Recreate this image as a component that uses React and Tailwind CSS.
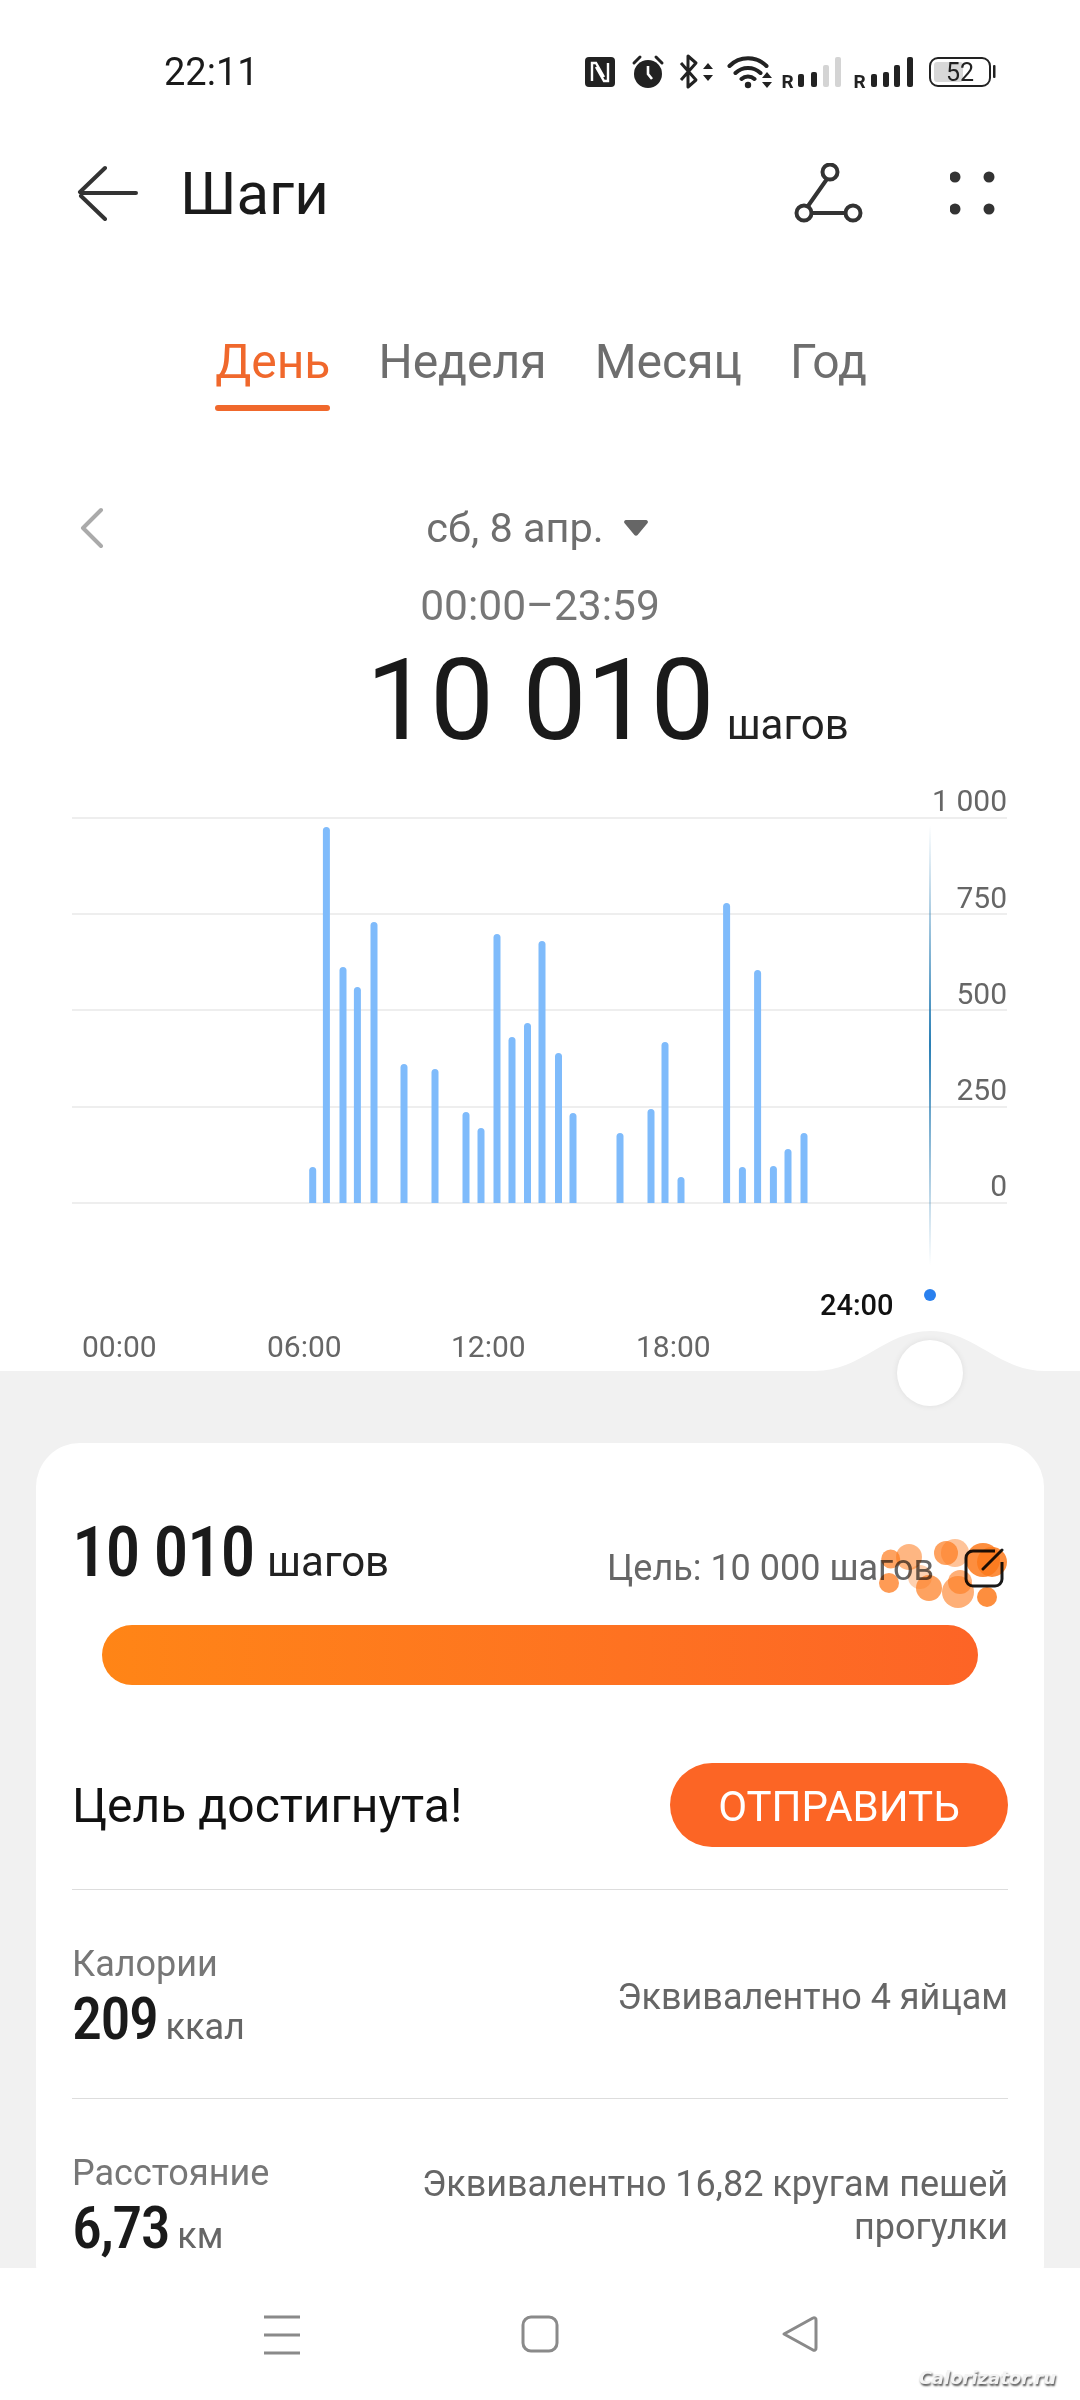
const bars = [
  [312.7, 1167], [326.4, 827], [343, 967], [357.4, 987], [374, 922], [404, 1064], [435, 1069],
  [466, 1112], [481, 1128], [497, 934], [512, 1037], [527.5, 1023], [542, 941], [558.5, 1053],
  [573, 1113], [620, 1133], [651, 1109], [665, 1042], [681, 1177], [726.6, 903], [742.4, 1167],
  [757.6, 970], [773.4, 1166], [788, 1149], [804, 1133],
];

const gridLines = [818, 914, 1010, 1107, 1203];

const splash = [
  [890.7, 1559, 9.5, 0.7], [909, 1557, 13, 0.55], [889, 1583, 10, 0.75], [920, 1577, 12, 0.35],
  [929, 1588, 13, 0.7], [946, 1553, 12, 0.7], [955, 1553, 14, 0.45], [958, 1592, 16, 0.6],
  [960, 1582, 12, 0.6], [987, 1597, 10, 0.85], [983, 1560, 17, 0.85], [992, 1562, 15, 0.85],
];

const StatusIcons = () => (
  <svg width="420" height="44" viewBox="580 50 420 44" fill="none">
    {/* nfc */}
    <rect x="585" y="57" width="30" height="30" rx="4" fill="#222" />
    <path d="M592 81V63h4l8 14M608 63v18h-4l-8-14" stroke="#fff" strokeWidth="2.4" />
    {/* alarm */}
    <circle cx="648" cy="74" r="14" fill="#222" />
    <path d="M648 66v8l4 5" stroke="#fff" strokeWidth="2.6" />
    <path d="M634 63l6-6M662 63l-6-6" stroke="#222" strokeWidth="3" strokeLinecap="round" />
    {/* bluetooth */}
    <path d="M681 63l15 17-8 7V56l8 7-15 17" stroke="#222" strokeWidth="3" strokeLinejoin="round" />
    <path d="M708 63l5 6h-10zM708 81l5-6h-10z" fill="#222" />
    {/* wifi */}
    <path d="M729.5 66a26 26 0 0 1 37 0M735.5 73a18 18 0 0 1 25 0M741.5 79a9.5 9.5 0 0 1 13 0" stroke="#222" strokeWidth="4" strokeLinecap="round" />
    <circle cx="748" cy="85" r="3.2" fill="#222" />
    <path d="M767 72l5 6h-10zM767 88l5-6h-10z" fill="#222" />
    {/* signal */}
    <text x="781.5" y="88" fontSize="19" fontWeight="700" fill="#222" fontFamily="Roboto, sans-serif">R</text>
    <rect x="798" y="74" width="6" height="13" rx="2" fill="#222" />
    <rect x="811" y="72" width="6" height="15" rx="2" fill="#222" />
    <rect x="823" y="65" width="6" height="22" rx="2" fill="#d4d4d4" />
    <rect x="835" y="57" width="6" height="30" rx="2" fill="#d4d4d4" />
    <text x="853.5" y="88" fontSize="19" fontWeight="700" fill="#222" fontFamily="Roboto, sans-serif">R</text>
    <rect x="871" y="74" width="6" height="13" rx="2" fill="#222" />
    <rect x="883" y="72" width="6" height="15" rx="2" fill="#222" />
    <rect x="894" y="65" width="6" height="22" rx="2" fill="#222" />
    <rect x="907" y="57" width="6" height="30" rx="2" fill="#222" />
    {/* battery */}
    <rect x="930" y="58" width="60" height="28" rx="8" stroke="#222" strokeWidth="2" />
    <rect x="934" y="62" width="29" height="20" rx="3" fill="#d8d8d8" />
    <text x="960" y="81" fontSize="25" textAnchor="middle" fill="#222" fontFamily="Roboto, sans-serif">52</text>
    <rect x="993" y="65" width="2.5" height="13" rx="1" fill="#222" />
  </svg>
);

const Header = () => (
  <div className="flex h-[98px] items-center pl-[77px] pr-[84px]">
    <svg width="62" height="56" viewBox="77 164 62 56" fill="none" stroke="#333" strokeWidth="4" strokeLinecap="round">
      <path d="M81 192h55M105 167L80 191M81 195l24 23" />
    </svg>
    <span className="ml-[41px] mt-[2px] text-[60px] leading-[68px] text-[#1a1a1a]">Шаги</span>
    <svg className="ml-auto" width="70" height="60" viewBox="794 162 70 60" fill="none" stroke="#333" strokeWidth="4">
      <circle cx="830" cy="171" r="7.5" />
      <circle cx="804" cy="212" r="7.5" />
      <circle cx="853" cy="212" r="7.5" />
      <path d="M827 178l-19 27M812 212h33" />
    </svg>
    <svg className="ml-[86px]" width="46" height="44" viewBox="950 169 46 44" fill="#333">
      <circle cx="955" cy="175" r="5.5" />
      <circle cx="989" cy="175" r="5.5" />
      <circle cx="955" cy="207" r="5.5" />
      <circle cx="989" cy="207" r="5.5" />
    </svg>
  </div>
);

const Tabs = () => (
  <div className="mt-[92px] flex justify-center gap-[48px] pl-[2px] text-[48px] leading-[56px] text-[#6e6e6e]">
    <div className="flex flex-col items-stretch">
      <span className="text-[#f0682c]">День</span>
      <div className="mt-[15px] h-[6px] rounded-full bg-[#f0682c]" />
    </div>
    <span>Неделя</span>
    <span>Месяц</span>
    <span>Год</span>
  </div>
);

const Chart = () => (
  <div className="relative mt-[22px] h-[581px]">
    <svg className="block" width="1080" height="581" viewBox="0 790 1080 581" fill="none">
      <defs>
        <linearGradient id="cursor" x1="0" y1="0" x2="0" y2="1">
          <stop offset="0" stopColor="#2a7fb5" stopOpacity="0" />
          <stop offset="0.5" stopColor="#2a7fb5" />
          <stop offset="1" stopColor="#2a7fb5" stopOpacity="0" />
        </linearGradient>
        <clipPath id="plot">
          <rect x="0" y="790" width="1080" height="413" />
        </clipPath>
      </defs>
      {gridLines.map((y) => (
        <rect key={y} x="72" y={y - 1} width="935" height="2" fill="#eeeeee" />
      ))}
      <g clipPath="url(#plot)">
        {bars.map(([x, top]) => (
          <rect key={x} x={x - 3.5} y={top} width="7" height={1210 - top} rx="3.5" fill="#7fbbfb" />
        ))}
      </g>
      <rect x="929" y="825" width="2" height="440" fill="url(#cursor)" />
      <circle cx="930" cy="1295" r="6" fill="#2a80ee" />
      <path d="M815 1371C862 1371 885 1331 930 1331S998 1371 1045 1371Z" fill="#f1f1f1" />
    </svg>

    <span className="absolute right-[73px] top-[-7px] text-[30px] leading-[36px] text-[#666]">1 000</span>
    <span className="absolute right-[73px] top-[90px] text-[30px] leading-[36px] text-[#666]">750</span>
    <span className="absolute right-[73px] top-[186px] text-[30px] leading-[36px] text-[#666]">500</span>
    <span className="absolute right-[73px] top-[282px] text-[30px] leading-[36px] text-[#666]">250</span>
    <span className="absolute right-[73px] top-[378px] text-[30px] leading-[36px] text-[#666]">0</span>

    <span className="absolute left-[82px] top-[539px] text-[30px] leading-[36px] text-[#666]">00:00</span>
    <span className="absolute left-[267px] top-[539px] text-[30px] leading-[36px] text-[#666]">06:00</span>
    <span className="absolute left-[451px] top-[539px] text-[30px] leading-[36px] text-[#666]">12:00</span>
    <span className="absolute left-[636px] top-[539px] text-[30px] leading-[36px] text-[#666]">18:00</span>
    <span className="absolute left-[820px] top-[497px] text-[29px] font-medium leading-[36px] text-[#111]">24:00</span>

    <div className="absolute left-[897px] top-[550px] z-10 size-[66px] rounded-full bg-white shadow-[0_0_6px_rgba(0,0,0,0.08)]" />
  </div>
);

const Stat = ({ label, value, unit, note }) => (
  <div className="flex h-[209px] items-center justify-between border-t border-[#dddddd]">
    <div className="mt-[8px]">
      <div className="text-[36px] leading-[42px] text-[#777]">{label}</div>
      <div className="flex items-baseline">
        <span className="text-[60px] font-medium leading-[68px] tracking-[-1.5px] text-[#1a1a1a] [font-stretch:75%]">{value}</span>
        <span className="ml-[8px] text-[36px] text-[#666]">{unit}</span>
      </div>
    </div>
    <div className="mt-[6px] w-[600px] text-right text-[36px] leading-[43px] text-[#666]">{note}</div>
  </div>
);

const Card = () => (
  <div className="relative rounded-[44px] bg-white px-[36px] pt-[68px]">
    <div className="flex items-start justify-between">
      <div className="flex items-baseline">
        <span className="text-[70px] font-medium leading-[82px] tracking-[-1.5px] text-[#1a1a1a] [font-stretch:75%]">10 010</span>
        <span className="ml-[13px] text-[42px] text-[#222]">шагов</span>
      </div>
      <div className="mt-[36px] mr-[4px] flex items-center">
        <span className="text-[36px] leading-[42px] text-[#666]">Цель: 10 000 шагов</span>
        <svg className="ml-[30px]" width="40" height="40" viewBox="964 1544 40 40" fill="none" stroke="#1a1a1a" strokeWidth="3">
          <path d="M995 1547h-22a7 7 0 0 0-7 7v21a7 7 0 0 0 7 7h22a7 7 0 0 0 7-7v-17" />
          <path d="M983 1565l19-19" strokeLinecap="round" />
        </svg>
      </div>
    </div>

    {/* orange sparkle over the goal */}
    <svg className="absolute left-[0px] top-[0px] pointer-events-none mix-blend-multiply" width="1009" height="170" viewBox="36 1443 1009 170">
      {splash.map(([x, y, r, o]) => (
        <circle key={`${x}-${y}`} cx={x} cy={y} r={r} fill="#fd7a1c" fillOpacity={o} />
      ))}
    </svg>

    <div className="mx-[30px] mt-[32px] h-[60px] rounded-full bg-gradient-to-r from-[#ff8516] to-[#fd6426]" />

    <div className="mt-[78px] flex items-center justify-between">
      <span className="mt-[2px] text-[48px] leading-[54px] text-[#111]">Цель достигнута!</span>
      <button className="h-[84px] w-[338px] rounded-full bg-[#fc6525] pt-[3px] text-[42px] text-white">ОТПРАВИТЬ</button>
    </div>

    <div className="mt-[42px]">
      <Stat label="Калории" value="209" unit="ккал" note="Эквивалентно 4 яйцам" />
      <Stat label="Расстояние" value="6,73" unit="км" note="Эквивалентно 16,82 кругам пешей прогулки" />
    </div>
  </div>
);

const NavBar = () => (
  <div className="relative z-20 flex h-[132px] shrink-0 items-start bg-white pl-[263px] pt-[47px]">
    <svg width="38" height="40" viewBox="262 2314 38 40" fill="none" stroke="#8a8a8a" strokeWidth="3">
      <path d="M263 2316h36M263 2334h36M263 2352h36" />
    </svg>
    <svg className="ml-[220px]" width="38" height="38" viewBox="520 2315 38 38" fill="none" stroke="#8a8a8a" strokeWidth="3">
      <rect x="522" y="2317" width="34" height="34" rx="8" />
    </svg>
    <svg className="ml-[222px]" width="38" height="38" viewBox="778 2315 38 38" fill="none" stroke="#8a8a8a" strokeWidth="3" strokeLinejoin="round">
      <path d="M781 2334l29-16a2 2 0 0 1 3 2v28a2 2 0 0 1-3 2z" />
    </svg>
    <span className="absolute bottom-[11px] right-[24px] text-[18px] font-bold italic leading-[22px] text-[#f4f4f4] [font-family:'DejaVu_Sans',sans-serif] [text-shadow:1px_2px_2px_#555]">Calorizator.ru</span>
  </div>
);

const App = () => {
  return (
    <div className="flex h-[2400px] w-[1080px] flex-col overflow-hidden bg-white [font-family:Roboto,sans-serif]">
      <div className="flex h-[144px] shrink-0 items-center justify-between pl-[164px] pr-[80px]">
        <span className="text-[38px] text-[#1a1a1a]">22:11</span>
        <StatusIcons />
      </div>
      <Header />
      <Tabs />

      <div className="mt-[93px] grid h-[48px] grid-cols-[1fr_auto_1fr] items-center px-[80px]">
        <svg width="24" height="42" viewBox="0 0 24 42" fill="none" stroke="#aaaaaa" strokeWidth="4" strokeLinecap="round" strokeLinejoin="round">
          <path d="M21 3L3 21l18 18" />
        </svg>
        <div className="flex items-center pr-[6px] text-[41.5px] leading-[48px] text-[#6e6e6e]">
          <span>сб, 8 апр.</span>
          <svg className="ml-[20px]" width="24" height="16" viewBox="0 0 24 16" fill="#666666">
            <path d="M2 0h20a2 2 0 0 1 1.6 3L13.6 15a2 2 0 0 1-3.2 0L.4 3A2 2 0 0 1 2 0z" />
          </svg>
        </div>
      </div>

      <div className="mt-[29px] text-center text-[42.5px] leading-[50px] text-[#777]">00:00–23:59</div>

      <div className="mt-[2px] flex items-baseline pl-[366px]">
        <span className="text-[114px] leading-[135px] text-[#1a1a1a]">10 010</span>
        <span className="ml-[12px] text-[42px] text-[#222]">шагов</span>
      </div>

      <Chart />

      <div className="min-h-0 flex-1 overflow-hidden bg-[#f1f1f1] px-[36px] pt-[72px]">
        <Card />
      </div>
      <NavBar />
    </div>
  );
};

export default App;
